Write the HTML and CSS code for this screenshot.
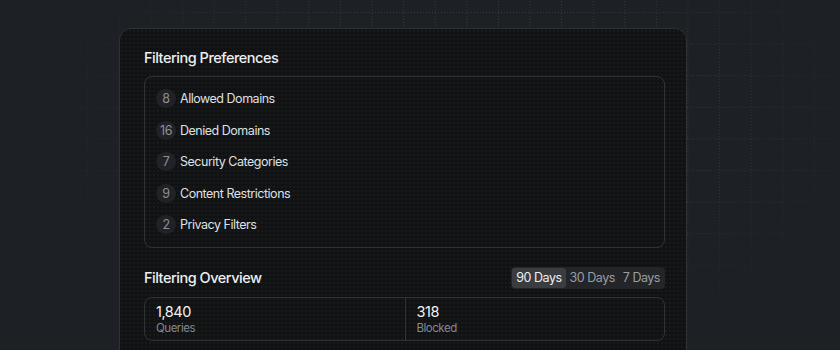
FILE: index.html
```html
<!DOCTYPE html>
<html lang="en">
<head>
  <meta charset="UTF-8" />
  <title>Filtering Preferences</title>
  <meta name="viewport" content="width=device-width, initial-scale=1.0">
  <link rel="stylesheet" href="styles.css">
</head>
<body>
  <div class="grid grid-v"></div>
  <div class="grid grid-h"></div>

  <main class="card">
    <h2 class="card-title">Filtering Preferences</h2>

    <ul class="pref-list">
      <li><span class="count">8</span>Allowed Domains</li>
      <li><span class="count">16</span>Denied Domains</li>
      <li><span class="count">7</span>Security Categories</li>
      <li><span class="count">9</span>Content Restrictions</li>
      <li><span class="count">2</span>Privacy Filters</li>
    </ul>

    <div class="overview-head">
      <h2 class="card-title">Filtering Overview</h2>
      <div class="tabs">
        <button class="tab active">90 Days</button>
        <button class="tab">30 Days</button>
        <button class="tab">7 Days</button>
      </div>
    </div>

    <div class="stats">
      <div class="stat">
        <div class="stat-value">1,840</div>
        <div class="stat-label">Queries</div>
      </div>
      <div class="stat">
        <div class="stat-value">318</div>
        <div class="stat-label">Blocked</div>
      </div>
    </div>
  </main>
</body>
</html>
```

FILE: styles.css
```css
body {
  font-family: Inter, "Noto Sans", sans-serif;
  letter-spacing: -0.03em;
  background-color: #1d2024;
  margin: 0;
  padding: 28px 0 0 119px;
  color: #e9eaec;
  height: 350px;
  box-sizing: border-box;
  overflow: hidden;
  position: relative;
}

/* faint dotted grid behind the card */
.grid {
  position: absolute;
  inset: 0;
  pointer-events: none;
  background-position: 24px 13px;
  background-size: 31.6px 31.6px;
}

.grid-v {
  background-image: linear-gradient(90deg, rgba(255,255,255,0.14) 1px, transparent 1px);
  -webkit-mask-image: repeating-linear-gradient(0deg, #000 0 1px, transparent 1px 3px),
    radial-gradient(ellipse 70% 90% at 55% 35%, #000 30%, transparent 78%);
  -webkit-mask-composite: source-in;
  mask-image: repeating-linear-gradient(0deg, #000 0 1px, transparent 1px 3px),
    radial-gradient(ellipse 70% 90% at 55% 35%, #000 30%, transparent 78%);
  mask-composite: intersect;
}

.grid-h {
  background-image: linear-gradient(0deg, rgba(255,255,255,0.14) 1px, transparent 1px);
  -webkit-mask-image: repeating-linear-gradient(90deg, #000 0 1px, transparent 1px 3px),
    radial-gradient(ellipse 70% 90% at 55% 35%, #000 30%, transparent 78%);
  -webkit-mask-composite: source-in;
  mask-image: repeating-linear-gradient(90deg, #000 0 1px, transparent 1px 3px),
    radial-gradient(ellipse 70% 90% at 55% 35%, #000 30%, transparent 78%);
  mask-composite: intersect;
}

.card {
  position: relative;
  width: 568px;
  box-sizing: border-box;
  background-color: #111214;
  background-image: radial-gradient(rgba(255,255,255,0.035) 1px, transparent 1px);
  background-size: 4px 4px;
  border: 1px solid #2f3135;
  border-radius: 12px;
  padding: 19px 21px 24px 24px;
}

.card-title {
  font-size: 14.5px;
  font-weight: 500;
  line-height: 20px;
  margin: 0 0 8px;
  color: #eeeff1;
}

.pref-list {
  list-style: none;
  margin: 0;
  padding: 6px 11px;
  border: 1px solid #303236;
  border-radius: 8px;
}

.pref-list li {
  display: flex;
  align-items: center;
  gap: 4px;
  height: 31.5px;
  font-size: 12.5px;
  color: #dfe0e3;
}

.count {
  min-width: 20px;
  height: 19px;
  border-radius: 10px;
  background: #202226;
  color: #8d9096;
  font-size: 12.5px;
  display: flex;
  align-items: center;
  justify-content: center;
}

.overview-head {
  display: flex;
  align-items: center;
  justify-content: space-between;
  margin-top: 19px;
  margin-bottom: 8px;
}

.overview-head .card-title {
  margin: 0;
}

.tabs {
  display: flex;
  padding: 1px;
  background: #232528;
  border-radius: 4px;
}

.tab {
  font-family: inherit;
  letter-spacing: inherit;
  font-size: 12.5px;
  color: #9a9da2;
  background: none;
  border: none;
  border-radius: 3px;
  padding: 0 4px;
  height: 20px;
}

.tab.active {
  background: #3a3c40;
  color: #eeeff1;
}

.stats {
  display: grid;
  grid-template-columns: 1fr 1fr;
  border: 1px solid #303236;
  border-radius: 8px;
}

.stat {
  padding: 5px 11px 5px;
}

.stat + .stat {
  border-left: 1px solid #303236;
}

.stat-value {
  font-size: 14.5px;
  line-height: 18px;
  color: #f1f2f4;
}

.stat-label {
  font-size: 11.5px;
  line-height: 14px;
  color: #85888e;
}
```
